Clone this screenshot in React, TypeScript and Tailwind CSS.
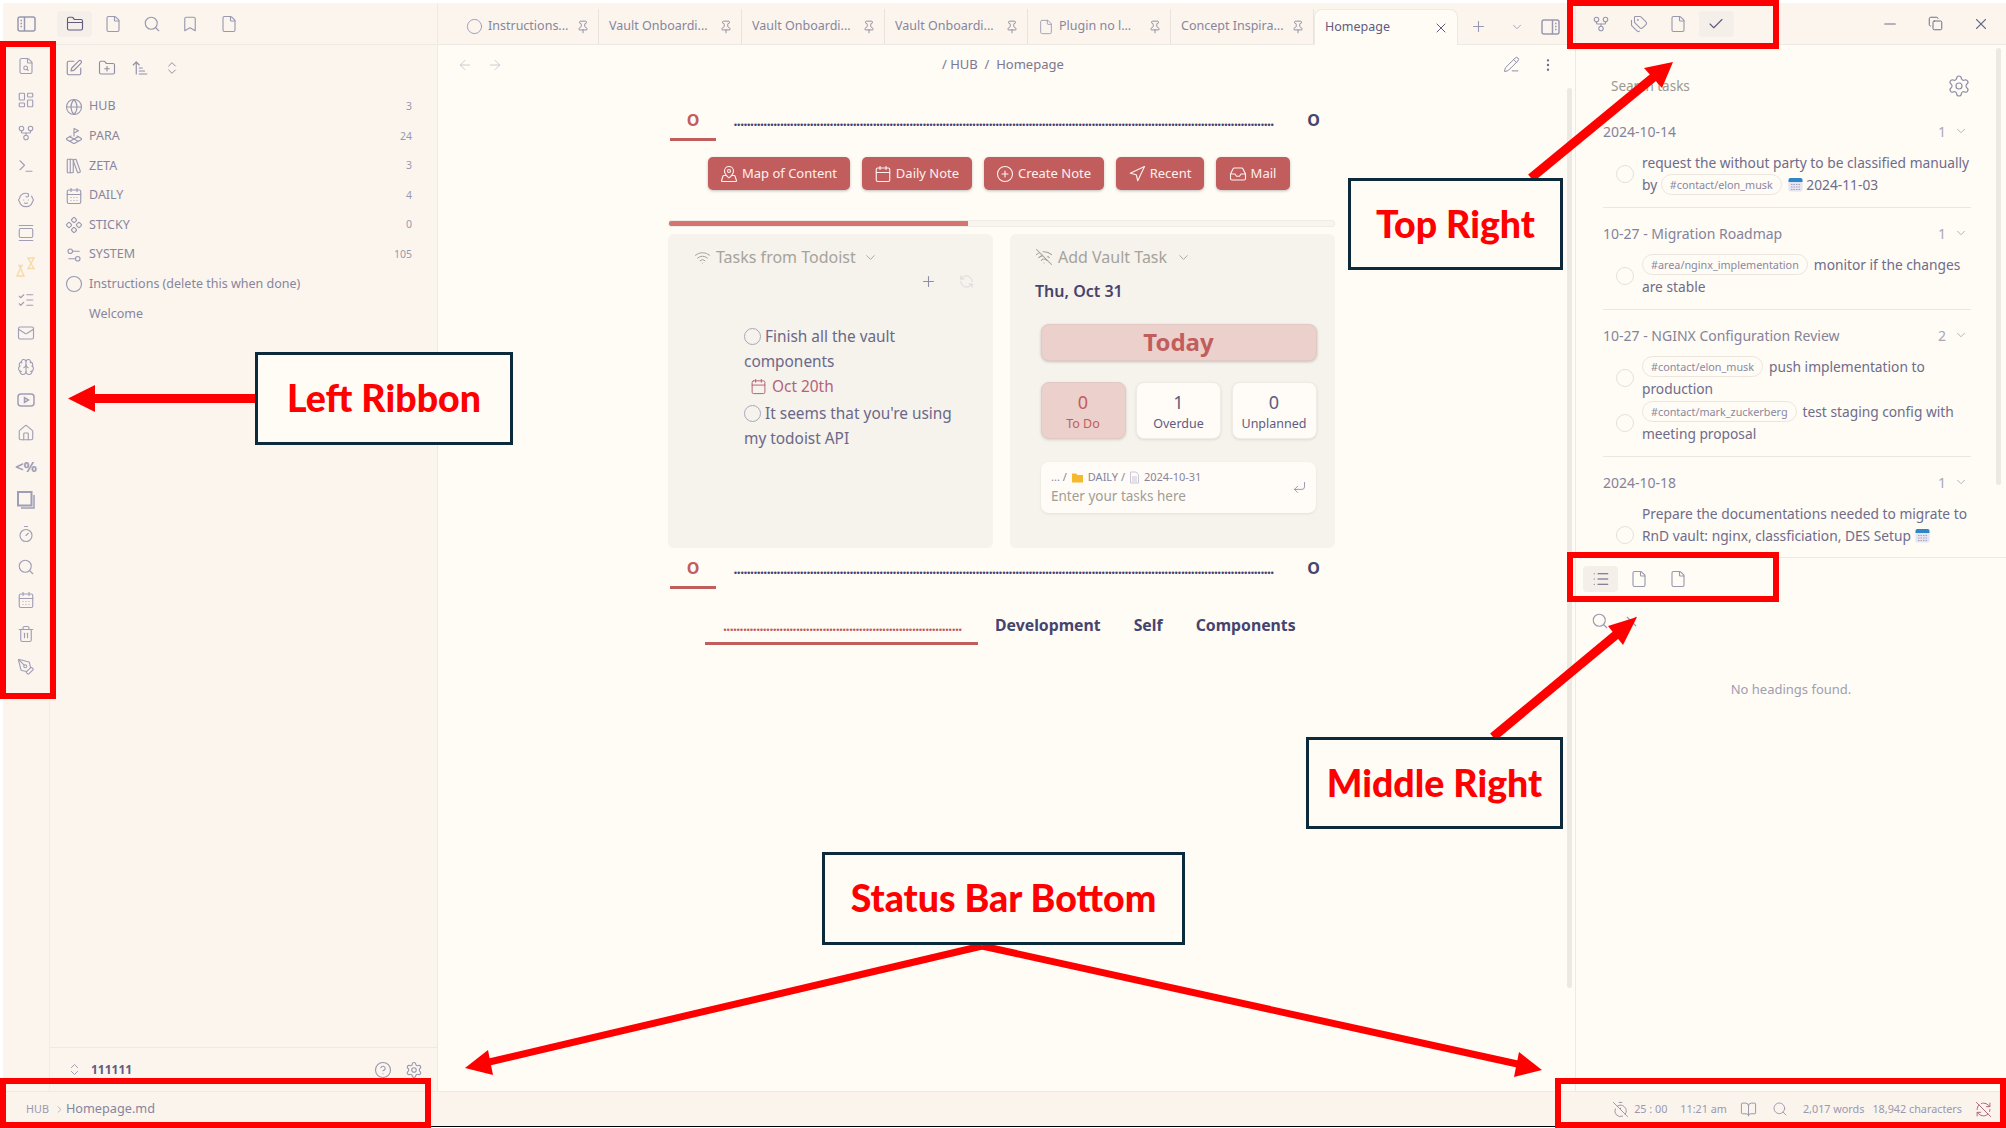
import React from 'react';
import {
  ArrowLeft, ArrowRight, ArrowUpNarrowWide, Baby, BookOpen, Bookmark, Brain, Calendar, CalendarDays, Check,
  ChevronDown, ChevronsUpDown, ChevronRight, Circle, CircleHelp, CirclePlus, Component, Copy, CornerDownLeft,
  EllipsisVertical, File, FileSearch, FolderClosed, FolderPlus, GalleryVertical, GitFork, Globe, House, Inbox,
  LandPlot, LayoutDashboard, LibraryBig, List, ListChecks, Mail, MapPinned, Minus, Navigation, PencilLine, PenTool,
  Pin, Plus, RefreshCcw, RefreshCwOff, Search, Settings, Settings2, SquarePen, Tags, Terminal, Timer, TimerOff,
  Trash2, Wifi, WifiOff, X,
} from 'lucide-react';

const ic = { size: 18, strokeWidth: 1.5 };

function PanelIcon({ flip }: { flip?: boolean }) {
  return (
    <svg width="19" height="18" viewBox="0 0 19 18" fill="none" stroke="currentColor" strokeWidth="1.5" className={flip ? '-scale-x-100' : ''}>
      <rect x="1" y="2" width="17" height="14" rx="2" />
      <path d="M7.5 2v14M3.500 5.500h1.500M3.500 8.500h1.500M3.500 11.500h1.500" />
    </svg>
  );
}

function ShapesIcon() {
  return (
    <svg width="20" height="20" viewBox="0 0 20 20" fill="none" stroke="#f8d9a8" strokeWidth="1.4">
      <path d="M1 19l3.500-8 3.500 8zM4.500 11l-1.500-2.500h3z" />
      <path d="M12 1h6l-3 5.500 3 5h-6l3-5z" />
    </svg>
  );
}

function DoubleSquare() {
  return (
    <svg width="18" height="18" viewBox="0 0 18 18" fill="none" stroke="currentColor" strokeWidth="2">
      <rect x="1" y="1" width="13.500" height="13.500" />
      <path d="M17 4v13H4" strokeWidth="1.500" />
    </svg>
  );
}

function MiniCalendar() {
  return (
    <svg width="15" height="15" viewBox="0 0 15 15" className="inline-block align-[-2px]">
      <rect x="0.500" y="1" width="14" height="13.500" rx="2" fill="#e6e4f0" />
      <path d="M0.500 3a2 2 0 0 1 2-2h10a2 2 0 0 1 2 2v2h-14z" fill="#2e86c9" />
      <path d="M3 7.500h9M3 10h9M3 12.500h9" stroke="#a3a3c4" strokeWidth="1.200" strokeDasharray="1.500 1" />
    </svg>
  );
}

const ribbon = [
  <FileSearch {...ic} />, <LayoutDashboard {...ic} />, <GitFork {...ic} />, <Terminal {...ic} />, <Baby {...ic} />,
  <GalleryVertical {...ic} />, <ShapesIcon />, <ListChecks {...ic} />, <Mail {...ic} />, <Brain {...ic} />,
  <svg width="18" height="18" viewBox="0 0 18 18" fill="none" stroke="currentColor" strokeWidth="1.5"><rect x="1" y="3" width="16" height="12" rx="3" /><path d="M7.500 6.500v5l4-2.500z" /></svg>,
  <House {...ic} />, <span className="text-[15px] font-bold leading-none">&lt;%</span>, <DoubleSquare />, <Timer {...ic} />,
  <Search {...ic} />, <CalendarDays {...ic} />, <Trash2 {...ic} />, <PenTool {...ic} />,
];

const tree = [
  { icon: <Globe {...ic} />, name: 'HUB', n: '3' },
  { icon: <LandPlot {...ic} />, name: 'PARA', n: '24' },
  { icon: <LibraryBig {...ic} />, name: 'ZETA', n: '3' },
  { icon: <CalendarDays {...ic} />, name: 'DAILY', n: '4' },
  { icon: <Component {...ic} />, name: 'STICKY', n: '0' },
  { icon: <Settings2 {...ic} />, name: 'SYSTEM', n: '105' },
  { icon: <Circle {...ic} />, name: 'Instructions (delete this when done)', n: '' },
  { icon: <span className="w-[18px]" />, name: 'Welcome', n: '' },
];

const tabs = [
  { icon: <Circle size={17} strokeWidth={1.3} />, name: 'Instructions...' },
  { name: 'Vault Onboardi...' },
  { name: 'Vault Onboardi...' },
  { name: 'Vault Onboardi...' },
  { icon: <File size={16} strokeWidth={1.3} />, name: 'Plugin no l...' },
  { name: 'Concept Inspira...' },
];

const buttons = [
  { icon: <MapPinned size={18} strokeWidth={1.5} />, name: 'Map of Content', w: 'w-[142px]' },
  { icon: <Calendar size={18} strokeWidth={1.5} />, name: 'Daily Note', w: 'w-[110px]' },
  { icon: <CirclePlus size={18} strokeWidth={1.5} />, name: 'Create Note', w: 'w-[120px]' },
  { icon: <Navigation size={18} strokeWidth={1.5} />, name: 'Recent', w: 'w-[88px]' },
  { icon: <Inbox size={18} strokeWidth={1.5} />, name: 'Mail', w: 'w-[74px]' },
];

function HeadRow() {
  return (
    <div className="flex h-[41px]">
      <div className="ml-[2px] w-[46px] h-[41px] border-b-[3px] border-[#c25d5d] text-center text-[16px] font-bold leading-[40px] text-[#c25d5d]">O</div>
      <div className="ml-[17.5px] w-[540px] h-[41px] whitespace-nowrap text-[14px] tracking-[-0.62px] font-bold leading-[41px] text-[#46436e]">{'.'.repeat(163)}</div>
      <div className="ml-[29px] w-[22px] text-center text-[16px] font-bold leading-[40px] text-[#46436e]">O</div>
    </div>
  );
}

function Stat({ n, label, active }: { n: string; label: string; active?: boolean }) {
  return (
    <div className={active
      ? 'w-[85px] h-[57px] rounded-[8px] border border-[#e3c9c5] bg-[#ebd0cc] text-[#c25d5d] text-center shadow-[0_1px_3px_rgba(0,0,0,0.14)]'
      : 'w-[85px] h-[57px] rounded-[8px] border border-[#efebe5] bg-[#fffbf6] text-[#5f5c80] text-center shadow-[0_1px_3px_rgba(0,0,0,0.1)]'}>
      <div className="mt-[7px] text-[18px] leading-[24px]">{n}</div>
      <div className="text-[12.5px] leading-[20px]">{label}</div>
    </div>
  );
}

function Tag({ children }: { children: React.ReactNode }) {
  return (
    <span className="inline-block h-[21px] rounded-full border border-[#ebe5de] px-[8px] text-[10.8px] leading-[19px] text-[#8a88a0] align-[1px] mr-[6px]">{children}</span>
  );
}

function Task({ children, low }: { children: React.ReactNode; low?: boolean }) {
  return (
    <div className={low ? 'flex items-end gap-[8px] pl-[13px]' : 'flex items-center gap-[8px] pl-[13px] [&+&]:mt-[2px]'}>
      <span className={low ? 'w-[18px] h-[18px] shrink-0 rounded-full border border-[#e4e0da] mb-[2px]' : 'w-[18px] h-[18px] shrink-0 rounded-full border border-[#e4e0da]'} />
      <div className="w-[332px] text-[13.75px] leading-[21.5px] text-[#6e6c8a]">{children}</div>
    </div>
  );
}

function Group({ title, n, last, children }: { title: string; n: string; last?: boolean; children: React.ReactNode }) {
  return (
    <div className={last ? 'pt-[14px]' : 'pt-[14px] pb-[12px] border-b border-[#ece7e1]'}>
      <div className="flex h-[22px] items-center text-[14px] text-[#85839a]">
        <span>{title}</span>
        <span className="ml-auto text-[#a9a7b8]">{n}</span>
        <ChevronDown size={14} strokeWidth={1.5} className="ml-[8px] mr-[3px] text-[#a9a7b8]" />
      </div>
      <div className="mt-[10px]">{children}</div>
    </div>
  );
}

export default function App() {
  return (
    <div className="relative flex h-[1128px] w-[2006px] flex-col overflow-hidden bg-white pl-[3px] pt-[3px] pb-[1px] font-['Noto_Sans',sans-serif] text-[#5f5c80]">
      <div className="flex min-h-0 flex-1">
        {/* left column */}
        <div className="flex w-[435px] shrink-0 flex-col border-r border-[#eee9e3] bg-[#fbf5ee]">
          <div className="flex h-[42px] shrink-0 items-center border-b border-[#eee9e3] text-[#9a98b0]">
            <div className="flex w-[46px] justify-center"><PanelIcon /></div>
            <div className="ml-[8px] flex gap-[3.5px]">
              <div className="flex h-[26px] w-[35px] items-center justify-center rounded-[4px] bg-[#f4efe9] text-[#5f5c80]"><FolderClosed {...ic} /></div>
              <div className="flex h-[26px] w-[35px] items-center justify-center"><File {...ic} /></div>
              <div className="flex h-[26px] w-[35px] items-center justify-center"><Search {...ic} /></div>
              <div className="flex h-[26px] w-[35px] items-center justify-center"><Bookmark {...ic} /></div>
              <div className="flex h-[26px] w-[35px] items-center justify-center"><File {...ic} /></div>
            </div>
          </div>
          <div className="flex min-h-0 flex-1">
            <div className="w-[46px] shrink-0 pt-[4.5px] text-[#a09eb6]">
              {ribbon.map((icon, i) => (
                <div key={i} className="flex h-[33.4px] items-center justify-center">{icon}</div>
              ))}
            </div>
            <div className="flex min-w-0 flex-1 flex-col border-l border-[#f1ece6]">
              <div className="flex h-[47px] shrink-0 items-center gap-[15px] pb-[2px] pl-[15px] text-[#8f8da6]">
                <SquarePen {...ic} /><FolderPlus {...ic} /><ArrowUpNarrowWide {...ic} /><ChevronsUpDown size={16} strokeWidth={1.5} />
              </div>
              {tree.map((row) => (
                <div key={row.name} className="flex h-[29.6px] items-center gap-[6px] pl-[15px] pr-[25px] text-[12.5px] text-[#87859d]">
                  <span className="flex text-[#9a98b0]">{row.icon}</span>
                  <span>{row.name}</span>
                  <span className="ml-auto text-[10.5px] text-[#9a98ae]">{row.n}</span>
                </div>
              ))}
              <div className="mt-auto flex h-[44px] shrink-0 items-center border-t border-[#eee9e3] pl-[17px] pr-[14px] text-[#9a98b0]">
                <ChevronsUpDown size={15} strokeWidth={1.5} />
                <span className="ml-[9px] text-[12px] font-bold text-[#5f5c80]">111111</span>
                <CircleHelp size={18} strokeWidth={1.5} className="ml-auto" />
                <Settings size={18} strokeWidth={1.5} className="ml-[13px]" />
              </div>
            </div>
          </div>
        </div>

        {/* main */}
        <div className="relative flex w-[1138px] shrink-0 flex-col border-r border-[#eee9e3] bg-[#fffbf5]">
          <div className="flex h-[42px] shrink-0 items-end border-b border-[#eee9e3] bg-[#fbf5ee] pl-[18px] text-[#87859d]">
            {tabs.map((t, i) => (
              <div key={i} className="flex h-[35px] w-[143px] items-center border-r border-[#e8e3dd] pl-[10px] pr-[8px] text-[12.5px]">
                {t.icon && <span className="mr-[5px] flex text-[#9a98b0]">{t.icon}</span>}
                <span className="whitespace-nowrap">{t.name}</span>
                <Pin size={14} strokeWidth={1.4} className="ml-auto text-[#7d7b95]" />
              </div>
            ))}
            <div className="flex h-[36px] w-[144px] items-center rounded-t-[8px] border-x border-t border-[#eee9e3] bg-[#fffbf5] pl-[10px] pr-[8px] text-[12.5px] text-[#5f5c80] -mb-[1px]">
              <span>Homepage</span>
              <X size={16} strokeWidth={1.5} className="ml-auto" />
            </div>
            <div className="flex h-[35px] items-center text-[#9a98b0]">
              <Plus size={17} strokeWidth={1.5} className="ml-[12px]" />
              <ChevronDown size={14} strokeWidth={1.5} className="ml-[23px]" />
              <span className="ml-[17px] flex"><PanelIcon flip /></span>
            </div>
          </div>

          <div className="flex h-[39px] shrink-0 items-center pl-[19px] pr-[19px] text-[#c9c7d2]">
            <ArrowLeft size={16} strokeWidth={1.4} />
            <ArrowRight size={16} strokeWidth={1.4} className="ml-[14px]" />
            <span className="ml-[439px] text-[13px] text-[#7a7892]">/ HUB&nbsp; / &nbsp;Homepage</span>
            <PencilLine size={17} strokeWidth={1.4} className="ml-auto text-[#8f8da6]" />
            <EllipsisVertical size={16} strokeWidth={1.6} className="ml-[20px] text-[#6e6c8a]" />
          </div>

          <div className="ml-[230px] w-[667px]">
            <div className="mt-[16px]"><HeadRow /></div>

            <div className="ml-[39.5px] mt-[16px] flex gap-[12px]">
              {buttons.map((b) => (
                <div key={b.name} className={`${b.w} flex h-[33px] items-center justify-center gap-[4px] rounded-[5px] bg-[#c25d5d] text-[13px] text-[#fdf1ef] shadow-[0_1px_3px_rgba(0,0,0,0.25)]`}>
                  {b.icon}<span>{b.name}</span>
                </div>
              ))}
            </div>

            <div className="mt-[30px] h-[7px] overflow-hidden rounded-[3px] border border-[#f1ece6] bg-[#f8f4ee]">
              <div className="-m-[1px] h-[7px] w-[300px] rounded-l-[3px] bg-[#d4756f]" />
            </div>

            <div className="mt-[7px] flex gap-[17px]">
              <div className="h-[314px] w-[325px] rounded-[6px] bg-[#f6f2ec] pt-[11px]">
                <div className="flex h-[24px] items-center gap-[5px] pl-[26px] text-[16px] text-[#a5a39c]">
                  <Wifi size={17} strokeWidth={1.4} /><span>Tasks from Todoist</span>
                  <ChevronDown size={15} strokeWidth={1.5} className="ml-[2px]" />
                </div>
                <div className="flex h-[24px] items-center justify-end gap-[22px] pr-[19px]">
                  <Plus size={17} strokeWidth={1.5} className="text-[#8f8da6]" />
                  <RefreshCcw size={15} strokeWidth={1.4} className="text-[#d5d3dc]" />
                </div>
                <div className="ml-[76px] mt-[31px] w-[226px] text-[15.4px] leading-[25px] text-[#6a6888]">
                  <div><span className="mr-[4px] inline-block h-[17px] w-[17px] rounded-full border border-[#a9a7bb] align-[-3px]" />Finish all the vault components</div>
                  <div className="mb-[2px] flex items-center gap-[5px] pl-[6px] text-[#b4637a]"><Calendar size={17} strokeWidth={1.4} /><span>Oct 20th</span></div>
                  <div><span className="mr-[4px] inline-block h-[17px] w-[17px] rounded-full border border-[#a9a7bb] align-[-3px]" />It seems that you're using my todoist API</div>
                </div>
              </div>

              <div className="h-[314px] w-[325px] rounded-[6px] bg-[#f6f2ec] pt-[11px]">
                <div className="flex h-[24px] items-center gap-[5px] pl-[25px] text-[16px] text-[#a5a39c]">
                  <WifiOff size={18} strokeWidth={1.4} /><span>Add Vault Task</span>
                  <ChevronDown size={15} strokeWidth={1.5} className="ml-[4px]" />
                </div>
                <div className="mt-[10px] pl-[25px] text-[16px] font-semibold leading-[24px] text-[#46436e]">Thu, Oct 31</div>
                <div className="ml-[30.5px] mt-[21px] h-[37px] w-[276px] rounded-[8px] border border-[#e3c9c5] bg-[#ebd0cc] text-center text-[24px] font-bold leading-[33px] text-[#c25d5d] shadow-[0_1px_3px_rgba(0,0,0,0.2)]">Today</div>
                <div className="ml-[30.5px] mt-[21px] flex w-[276px] justify-between">
                  <Stat n="0" label="To Do" active />
                  <Stat n="1" label="Overdue" />
                  <Stat n="0" label="Unplanned" />
                </div>
                <div className="ml-[31px] mt-[23px] flex h-[51px] w-[275px] items-center rounded-[8px] bg-[#fffbf6] pl-[10px] pr-[9px] shadow-[0_1px_3px_rgba(0,0,0,0.08)]">
                  <div>
                    <div className="flex items-center gap-[4px] text-[11px] leading-[18px] text-[#87859d]">
                      <span>... /</span>
                      <svg width="13" height="13" viewBox="0 0 13 13"><path d="M1 2.500h4l1.500 1.500H12v7.500H1z" fill="#f5b92e" /></svg>
                      <span>DAILY /</span>
                      <svg width="11" height="13" viewBox="0 0 11 13" fill="none" stroke="#c9c6dc"><path d="M1.500 1h5.500l2.500 2.500V12h-8zM3 6h5M3 8h5M3 10h5" /></svg>
                      <span>2024-10-31</span>
                    </div>
                    <div className="text-[13.5px] leading-[21px] text-[#a09e97]">Enter your tasks here</div>
                  </div>
                  <CornerDownLeft size={15} strokeWidth={1.4} className="ml-auto text-[#8f8da6]" />
                </div>
              </div>
            </div>

            <HeadRow />

            <div className="mt-[20px] flex h-[36px]">
              <div className="ml-[37px] h-[36px] w-[273px] whitespace-nowrap border-b-[3px] border-[#c25d5d] px-[18px] text-[14px] tracking-[-0.62px] font-bold leading-[34px] text-[#c25d5d]">{'.'.repeat(72)}</div>
              <div className="ml-[17px] text-[15.8px] font-bold leading-[33px] text-[#46436e]">Development</div>
              <div className="ml-[33px] text-[15.8px] font-bold leading-[33px] text-[#46436e]">Self</div>
              <div className="ml-[33px] text-[15.8px] font-bold leading-[33px] text-[#46436e]">Components</div>
            </div>
          </div>

          <div className="absolute left-[1129px] top-[85px] h-[900px] w-[5px] rounded-full bg-[#ece8e2]" />
        </div>

        {/* right column */}
        <div className="relative flex min-w-0 flex-1 flex-col bg-[#fffbf5]">
          <div className="flex h-[42px] shrink-0 items-center border-b border-[#eee9e3] bg-[#fbf5ee] pl-[7px] text-[#9a98b0]">
            <div className="flex gap-[3.5px]">
              <div className="flex h-[26px] w-[35px] items-center justify-center"><GitFork {...ic} /></div>
              <div className="flex h-[26px] w-[35px] items-center justify-center"><Tags {...ic} /></div>
              <div className="flex h-[26px] w-[35px] items-center justify-center"><File {...ic} /></div>
              <div className="flex h-[26px] w-[35px] items-center justify-center rounded-[4px] bg-[#f4efe9] text-[#5f5c80]"><Check {...ic} /></div>
            </div>
            <div className="ml-auto flex items-center gap-[29px] pr-[16px] text-[#6e6c8a]">
              <Minus {...ic} /><Copy size={15} strokeWidth={1.6} /><X {...ic} />
            </div>
          </div>

          <div className="h-[513px] shrink-0 overflow-hidden border-b border-[#eee9e3] pl-[27px] pr-[35px]">
            <div className="mb-[4px] mt-[25px] flex h-[32px] items-center pl-[8px] text-[13.5px] text-[#9a9891]">
              <span>Search tasks</span>
              <Settings size={24} strokeWidth={1.2} className="ml-auto text-[#8f8da6]" />
            </div>
            <Group title="2024-10-14" n="1">
              <Task>request the without party to be classified manually by <Tag>#contact/elon_musk</Tag><MiniCalendar /> 2024-11-03</Task>
            </Group>
            <Group title="10-27 - Migration Roadmap" n="1">
              <Task><Tag>#area/nginx_implementation</Tag>monitor if the changes are stable</Task>
            </Group>
            <Group title="10-27 - NGINX Configuration Review" n="2">
              <Task><Tag>#contact/elon_musk</Tag>push implementation to production</Task>
              <Task><Tag>#contact/mark_zuckerberg</Tag>test staging config with meeting proposal</Task>
            </Group>
            <Group title="2024-10-18" n="1" last>
              <Task low>Prepare the documentations needed to migrate to RnD vault: nginx, classficiation, DES Setup <MiniCalendar /></Task>
            </Group>
          </div>

          <div className="flex gap-[3.5px] pl-[7px] pt-[8px] text-[#9a98b0]">
            <div className="flex h-[26px] w-[35px] items-center justify-center rounded-[4px] bg-[#f4efe9] text-[#5f5c80]"><List {...ic} /></div>
            <div className="flex h-[26px] w-[35px] items-center justify-center"><File {...ic} /></div>
            <div className="flex h-[26px] w-[35px] items-center justify-center"><File {...ic} /></div>
          </div>
          <div className="mt-[20px] flex items-center gap-[14px] pl-[15px] text-[#9a98b0]">
            <Search {...ic} /><X size={17} strokeWidth={1.5} />
          </div>
          <div className="mt-[50px] text-center text-[13px] text-[#a09eaf]">No headings found.</div>

          <div className="absolute left-[420px] top-[45px] h-[437px] w-[5px] rounded-full bg-[#ece8e2]" />
        </div>
      </div>

      {/* status bar */}
      <div className="flex h-[36px] shrink-0 items-center border-t border-b border-t-[#eee9e3] border-b-black bg-[#faf4ed] pl-[23px] pr-[14px] text-[10.8px] text-[#9a98ae]">
        <span>HUB</span>
        <ChevronRight size={11} strokeWidth={1.5} className="ml-[5px]" />
        <span className="ml-[1px] text-[12.7px] text-[#87859d]">Homepage.md</span>
        <TimerOff size={17} strokeWidth={1.4} className="ml-auto" />
        <span className="ml-[5px]">25 : 00</span>
        <span className="ml-[13px]">11:21 am</span>
        <BookOpen size={17} strokeWidth={1.4} className="ml-[13px]" />
        <Search size={16} strokeWidth={1.4} className="ml-[15px]" />
        <span className="ml-[15px]">2,017 words</span>
        <span className="ml-[8px]">18,942 characters</span>
        <RefreshCwOff size={17} strokeWidth={1.4} className="ml-[13px] text-[#b4637a]" />
      </div>

      {/* annotation overlay */}
      <svg className="pointer-events-none absolute left-0 top-0" width="2006" height="1128" viewBox="0 0 2006 1128">
        <g fill="#ff0000" stroke="#ff0000">
          <path d="M255 398.500H90" strokeWidth="9" />
          <path d="M68 398.500L95 385V412z" strokeWidth="0" />
          <path d="M1531 178L1655 76" strokeWidth="9" />
          <path d="M1673 62L1644 68L1662 88z" strokeWidth="0" />
          <path d="M1493 737L1617 634" strokeWidth="9" />
          <path d="M1637 617L1608 626L1623 645z" strokeWidth="0" />
          <path d="M982 946L485 1063" strokeWidth="7" />
          <path d="M465 1068L488 1050L493 1075z" strokeWidth="0" />
          <path d="M982 946L1522 1065" strokeWidth="7" />
          <path d="M1542 1070L1519 1052L1514 1077z" strokeWidth="0" />
        </g>
      </svg>
      <div className="absolute left-0 top-[41px] h-[658px] w-[56px] border-[6px] border-[#ff0000]" />
      <div className="absolute left-[1567px] top-0 h-[49px] w-[212px] border-[6px] border-[#ff0000]" />
      <div className="absolute left-[1567px] top-[552px] h-[50px] w-[212px] border-[6px] border-[#ff0000]" />
      <div className="absolute left-0 top-[1078px] h-[50px] w-[431px] border-[6px] border-[#ff0000]" />
      <div className="absolute left-[1555px] top-[1078px] h-[50px] w-[451px] border-[6px] border-[#ff0000]" />

      <div className="absolute left-[255px] top-[352px] flex h-[93px] w-[258px] items-center justify-center border-[3px] border-[#0b2a3c] bg-[#fffbf5] font-['Lato',sans-serif] text-[37.5px] font-black text-[#ff0000]">Left Ribbon</div>
      <div className="absolute left-[1348px] top-[178px] flex h-[92px] w-[215px] items-center justify-center border-[3px] border-[#0b2a3c] bg-[#fffbf5] font-['Lato',sans-serif] text-[37.5px] font-black text-[#ff0000]">Top Right</div>
      <div className="absolute left-[1306px] top-[737px] flex h-[92px] w-[257px] items-center justify-center border-[3px] border-[#0b2a3c] bg-[#fffbf5] font-['Lato',sans-serif] text-[37.5px] font-black text-[#ff0000]">Middle Right</div>
      <div className="absolute left-[822px] top-[852px] flex h-[93px] w-[363px] items-center justify-center border-[3px] border-[#0b2a3c] bg-[#fffbf5] font-['Lato',sans-serif] text-[37.5px] font-black text-[#ff0000]">Status Bar Bottom</div>
    </div>
  );
}
